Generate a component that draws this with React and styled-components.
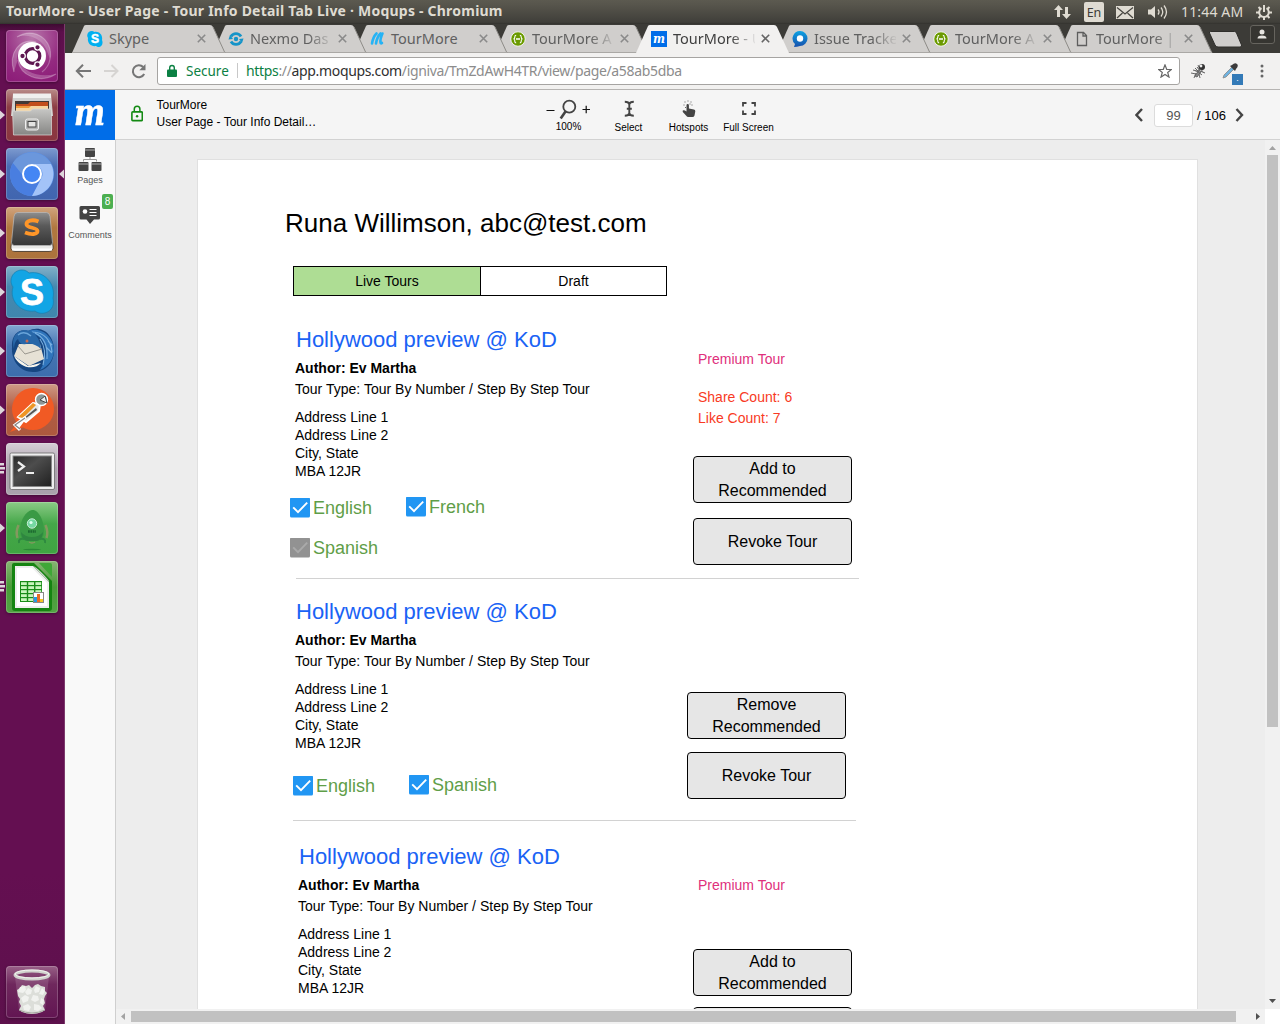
import React from "react";
import styled, { createGlobalStyle, css } from "styled-components";

const sans = '"Liberation Sans", Arial, sans-serif';
const chrome = '"Noto Sans", "Open Sans", sans-serif';

const Global = createGlobalStyle`
  * { box-sizing: border-box; }
  html, body { margin: 0; padding: 0; overflow: hidden; }
  body { font-family: ${sans}; color: #000; background: #ededed; }
  svg { display: block; flex: none; }
`;

/* ---------- desktop ---------- */
const Desktop = styled.div`
  width: 1280px;
  height: 1024px;
  display: flex;
  flex-direction: column;
  overflow: hidden;
`;
const MenuBar = styled.header`
  height: 24px;
  flex: none;
  display: flex;
  align-items: center;
  justify-content: space-between;
  padding: 0 8px 0 6px;
  background: linear-gradient(#5c5a50, #57554c 20%, #403f3a 92%, #33322e);
  color: #dfdbd2;
  font-family: ${chrome};
`;
const WindowTitle = styled.h1`
  margin: -2px 0 0;
  font-size: 14px;
  line-height: 22px;
  font-weight: 700;
  letter-spacing: 0.22px;
  white-space: nowrap;
`;
const Indicators = styled.div`
  display: flex;
  align-items: center;
  height: 24px;
`;
const LanguageBadge = styled.span`
  width: 20px;
  height: 20px;
  margin: 0 12px 0 13px;
  border-radius: 2px;
  background: #dfdbd2;
  color: #3c3b37;
  font-size: 12.5px;
  line-height: 21px;
  text-align: center;
`;
const VolumeIcon = styled.svg`
  margin-left: 13px;
`;
const Clock = styled.span`
  width: 63px;
  margin: -1px 12px 0 12px;
  font-size: 14px;
  line-height: 22px;
  letter-spacing: 0.15px;
  white-space: nowrap;
`;
const Workspace = styled.div`
  flex: 1;
  display: flex;
  min-height: 0;
`;

/* ---------- launcher ---------- */
const Launcher = styled.nav`
  width: 65px;
  flex: none;
  display: flex;
  flex-direction: column;
  gap: 7px;
  padding: 6px 0 6px;
  border-right: 1px solid #7d3a6d;
  background: linear-gradient(#3e0a32, #5c0f4b 8px, #640f51 45px, #640f51 85%, #5d114c);
`;
const LauncherItem = styled.div`
  position: relative;
  width: 64px;
  height: 52px;
  padding-left: 6px;
  ${(p) => p.$last && css`margin-top: auto;`}
`;
const Tile = styled.div`
  width: 52px;
  height: 52px;
  border-radius: 4px;
  overflow: hidden;
  background: ${(p) => p.$bg};
  box-shadow: inset 0 0 0 1px rgba(255, 255, 255, 0.2), 0 1px 3px rgba(0, 0, 0, 0.35);
`;
const Running = styled.svg`
  position: absolute;
  left: 0;
  top: 20px;
`;
const Focused = styled.svg`
  position: absolute;
  right: 0;
  top: 20px;
`;

/* ---------- browser ---------- */
const Browser = styled.main`
  flex: 1;
  display: flex;
  flex-direction: column;
  min-width: 0;
`;
const TabStrip = styled.div`
  height: 29px;
  flex: none;
  display: flex;
  padding-left: 6.5px;
  background: #3c3b37;
  position: relative;
  overflow: hidden;
`;
const TabBox = styled.div`
  position: relative;
  z-index: ${(p) => p.$z};
  width: 154px;
  margin-right: -13px;
  height: 29px;
  flex: none;
  display: flex;
  align-items: center;
  padding: 0 0 0 15.5px;
`;
const TabShape = styled.svg`
  position: absolute;
  inset: 0;
  z-index: -1;
`;
const TabTitle = styled.span`
  width: 82px;
  margin: -1px 6px 0 6px;
  font: 14.5px/24px ${chrome};
  color: ${(p) => (p.$active ? "#3f3f3f" : "#606060")};
  white-space: nowrap;
  ${(p) => p.$fade && css`mask-image: linear-gradient(90deg, #000 58px, rgba(0, 0, 0, 0.08) 82px);`}
`;
const NewTab = styled.svg`
  margin: 7px 8px 0 9px;
`;
const UserButton = styled.div`
  width: 25px;
  height: 19px;
  margin-top: 1px;
  border: 1px solid #66645e;
  border-radius: 3px;
  background: #363531;
  display: flex;
  align-items: center;
  justify-content: center;
`;
const AddressBar = styled.div`
  height: 37px;
  flex: none;
  display: flex;
  align-items: center;
  padding: 0 8px 1px 10px;
  background: #f2f1f0;
  border-bottom: 1px solid #b6b4b2;
`;
const NavIcon = styled.svg`
  margin-left: ${(p) => p.$gap || 0}px;
`;
const UrlField = styled.div`
  width: 1023px;
  height: 28px;
  margin: 0 10px 0 9px;
  padding: 0 7px 0 8px;
  display: flex;
  align-items: center;
  border: 1px solid #a6a4a2;
  border-radius: 3px;
  background: #fff;
  font: 14px/26px ${chrome};
`;
const Secure = styled.span`
  width: 51px;
  margin-left: 8px;
  color: #0b8043;
  height: 26px;
  font-size: 13.5px;
`;
const UrlText = styled.span`
  flex: 1;
  height: 26px;
  padding-left: 8px;
  color: #8c8c8c;
  letter-spacing: -0.34px;
  b { font-weight: 400; color: #0b8043; }
  i { font-style: normal; color: #303030; }
`;
const UrlDivider = styled.span`
  width: 1px;
  height: 15px;
  background: #c8c8c8;
`;
const Extension = styled.div`
  position: relative;
  margin-right: ${(p) => p.$gap}px;
`;
const ExtensionBadge = styled.span`
  position: absolute;
  left: 10px;
  top: 11px;
  width: 11px;
  height: 11px;
  background: #337ab7;
  color: #fff;
  font: 9px/9px ${sans};
  text-align: center;
`;

/* ---------- Moqups shell ---------- */
const AppHeader = styled.div`
  height: 50px;
  flex: none;
  display: flex;
`;
const Logo = styled.div`
  width: 50px;
  height: 50px;
  background: #006de8;
  color: #fff;
  font: italic 700 35px/46px "DejaVu Serif", serif;
  display: flex;
  justify-content: center;
  span { transform: scaleX(0.84); -webkit-text-stroke: 0.5px #fff; }
`;
const HeaderBar = styled.div`
  flex: 1;
  display: flex;
  align-items: flex-start;
  padding-left: 16px;
  background: #f5f5f5;
  border-bottom: 1px solid #d2d2d2;
`;
const LockSlot = styled.div`
  width: 25.5px;
  padding-top: 15px;
`;
const DocumentName = styled.div`
  width: 382px;
  padding-top: 7px;
  font-size: 12px;
  line-height: 17px;
`;
const Tool = styled.div`
  width: 60px;
  padding-top: ${(p) => p.$top || 10}px;
  display: flex;
  flex-direction: column;
  align-items: center;
  font-size: 10px;
  line-height: 12px;
  white-space: nowrap;
`;
const ToolIcon = styled.div`
  height: 22px;
  display: flex;
  justify-content: center;
`;
const Pager = styled.div`
  margin-left: auto;
  height: 50px;
  padding-right: 36px;
  display: flex;
  align-items: center;
  font-size: 13px;
`;
const PageInput = styled.div`
  width: 39px;
  height: 23px;
  margin: 1px 4px 0 11px;
  border: 1px solid #dcdcdc;
  border-radius: 3px;
  background: #fff;
  color: #555;
  line-height: 22px;
  text-align: center;
`;
const PageTotal = styled.span`
  width: 38px;
  padding-top: 1px;
`;
const Body = styled.div`
  flex: 1;
  display: flex;
  min-height: 0;
`;
const SideBar = styled.aside`
  width: 51px;
  flex: none;
  padding-top: 8px;
  background: #f9f9f9;
  border-right: 1px solid #cfcfcf;
`;
const SideItem = styled.div`
  position: relative;
  width: 50px;
  height: 56px;
  display: flex;
  flex-direction: column;
  align-items: center;
  font-size: 9px;
  line-height: 11px;
  color: #555;
  svg { margin-bottom: 3px; }
`;
const CountBadge = styled.span`
  position: absolute;
  right: 2px;
  top: -10px;
  width: 11px;
  height: 15px;
  border-radius: 2px;
  background: #4caf50;
  color: #fff;
  font-size: 10px;
  line-height: 15px;
  text-align: center;
`;
const Viewport = styled.div`
  flex: 1;
  display: grid;
  grid-template: 1fr 15px / 1fr 15px;
  min-width: 0;
`;
const Canvas = styled.div`
  overflow: hidden;
  min-height: 0;
  padding: 19px 0 0 81px;
  background: #ededed;
`;
const VerticalBar = styled.div`
  display: flex;
  flex-direction: column;
  align-items: center;
  justify-content: space-between;
  background: #f1f1f1;
  padding: 6px 0 6px;
`;
const VerticalThumb = styled.div`
  width: 11px;
  height: 572px;
  margin: 5px 0 auto;
  background: #c1c1c1;
`;
const HorizontalBar = styled.div`
  display: flex;
  align-items: center;
  background: #f1f1f1;
  padding: 0 5px 0 5px;
`;
const HorizontalThumb = styled.div`
  width: 1105px;
  height: 11px;
  margin: 0 auto 0 6px;
  background: #c1c1c1;
`;
const Corner = styled.div`
  background: #fff;
`;

/* ---------- mock-up page ---------- */
const Sheet = styled.div`
  width: 1001px;
  height: 1100px;
  border: 1px solid #e0e0e0;
  background: #fff;
  padding: 47px 0 0 87px;
`;
const UserName = styled.h2`
  margin: 0;
  font-size: 26px;
  font-weight: 400;
  line-height: 32px;
`;
const Segments = styled.div`
  width: 374px;
  height: 30px;
  margin: 27px 0 31px 8px;
  display: flex;
  border: 1px solid #000;
`;
const Segment = styled.div`
  flex: ${(p) => (p.$active ? "0 0 186px" : "1")};
  font-size: 14px;
  line-height: 28px;
  text-align: center;
  background: ${(p) => (p.$active ? "#aedd94" : "#fff")};
  & + & { border-left: 1px solid #000; }
`;
const TourBlock = styled.section`
  width: 580px;
  height: ${(p) => p.$height}px;
  display: flex;
  flex-direction: column;
  padding-left: 5px;
`;
const TourRow = styled.div`
  display: flex;
  height: ${(p) => p.$height}px;
`;
const TourInfo = styled.div`
  width: ${(p) => p.$width}px;
  flex: none;
`;
const TourDetails = styled.div`
  padding-left: ${(p) => p.$indent}px;
  font-size: 14px;
`;
const TourTitle = styled.h3`
  margin: 0 0 5px 1px;
  font-size: 22px;
  font-weight: 400;
  line-height: 26px;
  color: #1a63f5;
`;
const Author = styled.div`
  font-weight: 700;
  line-height: 20px;
`;
const TourType = styled.div`
  line-height: 22px;
  letter-spacing: 0.012px;
`;
const Address = styled.div`
  margin-top: 8px;
  line-height: 18px;
`;
const Languages = styled.div`
  display: grid;
  grid-template-columns: 116px 116px;
  row-gap: 18px;
  margin: ${(p) => p.$top}px 0 0 ${(p) => p.$indent}px;
`;
const Language = styled.div`
  height: 22px;
  padding-top: ${(p) => (p.$raised ? 0.4 : 1.4)}px;
  display: flex;
  align-items: flex-start;
  gap: 3px;
  font-size: 18px;
  line-height: 20.4px;
  color: #5f9e48;
`;
const Actions = styled.div`
  width: 159px;
  display: flex;
  flex-direction: column;
  font-size: 14px;
  line-height: 21px;
`;
const Premium = styled.div`
  margin: ${(p) => p.$top}px 0 0 5px;
  color: #e0307c;
`;
const Counts = styled.div`
  margin: 17px 0 0 5px;
  color: #f83a24;
`;
const ActionButton = styled.div`
  height: 47px;
  flex: none;
  margin-top: ${(p) => p.$top}px;
  padding: 0 20px;
  display: flex;
  align-items: center;
  justify-content: center;
  text-align: center;
  border: 1px solid #000;
  border-radius: 4px;
  background: #e6e6e6;
  font-size: 16px;
  line-height: 22px;
`;
const Divider = styled.div`
  width: 563px;
  height: 1px;
  flex: none;
  margin-left: ${(p) => p.$left}px;
  background: #d2d2d2;
`;

/* ---------- launcher drawings ---------- */
const art = {
  ubuntu: (
    <svg width="52" height="52">
      <g fill="none" stroke="#fff" strokeOpacity=".28" strokeWidth="1.2">
        <path d="M11 7C28-4 48 10 44 29c-1 7-4 10-8 13" />
        <path d="M8 42C2 22 14 8 30 12" />
        <path d="M50 44C34 54 14 46 12 30" />
      </g>
      <path d="M11 7C28-4 48 10 44 29l-3-8C37 10 24 3 11 7z" fill="#fff" opacity=".22" />
      <path d="M8 42C2 22 14 8 30 12c-12 0-20 8-19 20z" fill="#fff" opacity=".22" />
      <path d="M50 44C34 54 14 46 12 30c6 12 20 18 38 14z" fill="#fff" opacity=".22" />
      <circle cx="26" cy="26" r="14" fill="#fff" />
      <circle cx="26.500" cy="26" r="7.300" fill="none" stroke="#5e1750" strokeWidth="3.200" />
      <g fill="#5e1750" stroke="#fff" strokeWidth="1.3">
        <circle cx="16.500" cy="26" r="2.800" /><circle cx="31.500" cy="17.300" r="2.800" /><circle cx="31.500" cy="34.700" r="2.800" />
      </g>
    </svg>
  ),
  files: (
    <svg width="52" height="52">
      <defs><linearGradient id="cab" x2="0" y2="1"><stop stopColor="#c6c6c4" /><stop offset="1" stopColor="#868684" /></linearGradient></defs>
      <path d="M7 5h38l2 22H5z" fill="#d2d2d0" /><path d="M7 4.500h38V9H7z" fill="#f0f0ee" />
      <path d="M9 12h34v13H9z" fill="#423a36" />
      <path d="M10 15h12l2-2h18v10H10z" fill="#c34f1c" /><path d="M10 17h32v7H10z" fill="#ef9b3b" /><path d="M10 19h13l2-2h17v6H10z" fill="#f7d6a0" />
      <path d="M6.500 22h18l2-2h19v26H7.500z" fill="url(#cab)" stroke="#dcdcda" strokeWidth=".7" />
      <rect x="19.500" y="30" width="13" height="11" rx="2" fill="#b4b4b2" stroke="#eee" />
      <rect x="22" y="32.500" width="8" height="5.500" fill="#e4e4e2" stroke="#444" />
    </svg>
  ),
  chromium: (
    <svg width="52" height="52">
      <circle cx="26" cy="26" r="22" fill="#5c92e8" />
      <path d="M7 15A22 22 0 0 0 26 48L35 31 18 29z" fill="#497ee0" />
      <path d="M7 15A22 22 0 0 1 45 16H26L17 27z" fill="#6b97dc" />
      <path d="M26 16h19A22 22 0 0 1 26 48l9-17c4-6 0-14-9-15z" fill="#a3c3f8" />
      <circle cx="26" cy="26" r="9" fill="#4486f4" stroke="#fff" strokeWidth="2" />
    </svg>
  ),
  sublime: (
    <svg width="52" height="52">
      <defs><linearGradient id="key" x2="0" y2="1"><stop stopColor="#8e8e8e" /><stop offset=".4" stopColor="#5a5a5a" /><stop offset="1" stopColor="#363636" /></linearGradient></defs>
      <path d="M9 14L5 39q-1 5 4 5.500h34q5-.5 4-5.500l-4-25z" fill="#e8e8e6" stroke="#3c3024" strokeWidth=".8" />
      <path d="M11.500 5.500h29q3 0 3.500 4l2.500 26q0 3-3 3H8.500q-3 0-3-3L8 9.500q.5-4 3.500-4z" fill="url(#key)" stroke="#bbb" strokeWidth=".7" />
      <path d="M32.500 14.500c-6-2.500-12.500-1-12 3 .5 4 11 2.500 11 6.500 0 3.500-6 4-12.500 1.500" fill="none" stroke="#ff9628" strokeWidth="3.800" />
      <path d="M6 42.500h40" stroke="#fff" strokeWidth="2" />
    </svg>
  ),
  skype: (
    <svg width="52" height="52">
      <path d="M16 4C7 4 2 14 7 21 3 34 14 47 29 45c8 6 21 0 18-13C50 18 38 4 23 7c-2-2-4-3-7-3z" fill="#12a5e5" stroke="#1781b0" strokeWidth=".7" />
      <text x="26" y="38.500" textAnchor="middle" fill="#fff" stroke="#fff" strokeWidth=".8" strokeLinejoin="round" fontFamily="Liberation Sans" fontWeight="700" fontSize="36">S</text>
    </svg>
  ),
  thunderbird: (
    <svg width="52" height="52">
      <path d="M6 22C5 9 14 3 22 6c14-7 26 4 26 19 0 14-9 22-21 22C14 47 5 36 6 22z" fill="#164681" />
      <path d="M20 7c14-7 28 4 28 19-1 9-5 15-14 19 7-11 8-22 2-30-4-5-9-7-16-8z" fill="#2f74bb" />
      <path d="M26 7c13 0 19 9 20 20M29 8c9 4 13 13 12 26M34 14c5 7 6 15 3 26M42 16l4 4M40 22l6 6" fill="none" stroke="#78afe0" strokeWidth="1.1" />
      <path d="M13 19l21 0 4 15-15 7L8 31z" fill="#e6e1d5" /><path d="M12 21l7 8 17-5" fill="none" stroke="#9a978f" />
      <path d="M8 24C5 14 9 5 20 5c9 1 14 9 15 19-4-4-9-6-15-5-4 1-7-1-8-5-3 2-4 6-4 10z" fill="#2867a8" />
      <path d="M12 10q6-5 13 1" fill="none" stroke="#6aa5da" strokeWidth="1.500" />
      <circle cx="21" cy="16" r="1.500" fill="#c96b51" /><path d="M8 31l14 10 13-3c-6 7-21 6-27-7z" fill="#f8f5ec" />
    </svg>
  ),
  postman: (
    <svg width="52" height="52">
      <circle cx="27" cy="25" r="21" fill="#f15a24" /><path d="M4 48l9-11 5 6z" fill="#f15a24" />
      <path d="M12 33l15-14 7 1-1 7-13 11z" fill="#e6e6e6" stroke="#fff" strokeWidth="2" />
      <path d="M12 33l15-14 3 2-13 13z" fill="#ee9525" /><path d="M18 34l12-10 1 2-12 9z" fill="#555" />
      <circle cx="35.500" cy="15.500" r="6" fill="#8d9696" stroke="#fff" strokeWidth="1.4" /><path d="M34 16l5-4 2 7z" fill="#eee" stroke="#444" strokeWidth="1" />
      <path d="M20 33L9 41l5 5M18 35l-6 8" fill="none" stroke="#fff" strokeWidth="3" /><path d="M19 34L9 41l5 4" fill="none" stroke="#888" strokeWidth="1.3" />
    </svg>
  ),
  terminal: (
    <svg width="52" height="52">
      <defs><linearGradient id="term" x2="1" y2="1"><stop stopColor="#292929" /><stop offset=".4" stopColor="#4d4d4d" /><stop offset="1" stopColor="#202020" /></linearGradient></defs>
      <rect x="4" y="10" width="44.500" height="36.500" rx="1.500" fill="#eee" stroke="#686868" strokeWidth=".8" />
      <rect x="7" y="13" width="38.500" height="30.500" fill="url(#term)" stroke="#888" />
      <path d="M12 19l6 4.500-6 4.500" fill="none" stroke="#eee" strokeWidth="2.200" /><path d="M20 30h8" stroke="#eee" strokeWidth="2" />
    </svg>
  ),
  robot: (
    <svg width="52" height="52">
      <path d="M14 29C14 18 20 9 26 8s12 10 12 21q0 8-6 10H20q-6-2-6-10z" fill="#3a9a45" />
      <path d="M15 30q0 7 6 9h10q6-2 6-9-4 5-11 5t-11-5z" fill="#2f8640" />
      <path d="M12.500 23q-3 7-1 13M39.500 23q3 7 1 13" fill="none" stroke="#84995f" strokeWidth="2.500" />
      <path d="M23 40q3 2 6 0" fill="none" stroke="#84995f" strokeWidth="1.500" />
      <path d="M22 29.500h8" stroke="#1d6a31" strokeWidth="2.500" strokeDasharray="1.800 .6" />
      <path d="M18 37q-6-1-5 4M34 37q6-1 5 4" fill="none" stroke="#2f8a40" strokeWidth="2" />
      <circle cx="26" cy="21.500" r="4.700" fill="#75d9a2" stroke="#c8ecd6" /><circle cx="25" cy="20.500" r="1.600" fill="#e0fff0" />
      <ellipse cx="26" cy="47.500" rx="9" ry=".8" fill="#2b8737" />
    </svg>
  ),
  calc: (
    <svg width="52" height="52">
      <path d="M8 2h20l18 18v27q0 3-3 3H9q-3 0-3-3V4q0-2 2-2z" fill="#158411" /><path d="M33 2h11q2 0 2 2v12z" fill="#3fa737" />
      <path d="M9 5h18l16 16v26H9z" fill="#eee" /><path d="M11 7h15l15 15v23H11z" fill="#fff" />
      <path d="M27 5l16 16v-1q-2-3-8-9-5-5-8-6z" fill="#d0d0d0" />
      <rect x="14" y="20" width="22" height="21" fill="#188c18" />
      {[0, 1, 2, 3, 4].map((r) => [0, 1, 2].map((c) => <rect key={`${r}-${c}`} x={15 + c * 7.2} y={21.2 + r * 4} width="5.800" height="2.800" fill="#c9f5bd" />))}
      <rect x="27.500" y="31.500" width="10" height="10" fill="#fff" stroke="#888" /><path d="M28 36h3v5h-3z" fill="#249ce5" /><path d="M31 33h3v8h-3z" fill="#e96b24" /><path d="M34 38h3v3h-3z" fill="#f6c522" />
    </svg>
  ),
  trash: (
    <svg width="52" height="52">
      <path d="M9 11l4 33q13 7 26 0l4-33z" fill="#ead9e6" opacity=".16" />
      <path d="M11 24l3-2 2-3 4 1 3-1 3 3 3-3 3-1 3 2 4 1v4l2 2-2 3-1 3 1 4-2 3 2 4-3 2q-10 4-20 0l-3-2 2-4-2-4 1-3-2-3z" fill="#dcded9" />
      <g fill="#f1f2ef"><path d="M14 21l5-1 1 4-3 3-5-1zM22 22l4 2-1 4-4 1-2-3zM30 20l4 2-1 4-4 1-1-3zM36 22l3 3-2 4-4-1zM15 32l4-3 4 2-1 4-5 2zM27 29l5 1 1 4-4 2-4-2zM35 32l3 2-1 5-3-2zM17 40l5-2 3 3-2 4-5-1zM28 38l5 1 3 3-4 3-4-1z" /></g>
      <ellipse cx="26" cy="9" rx="17" ry="4" fill="none" stroke="#d0d2cd" strokeWidth="3" /><ellipse cx="26" cy="8" rx="17" ry="4" fill="none" stroke="#f2f3ef" strokeWidth="1" />
      <path d="M13 44q13 6 26 0" fill="none" stroke="#a4a79f" />
    </svg>
  ),
};

const launcherItems = [
  { id: "ubuntu", bg: "radial-gradient(circle at 50% 15%, #b876ab, #942a80 60%, #8b1a77)" },
  { id: "files", bg: "linear-gradient(#b98d89, #8d3d44 35%, #8a3640)", windows: 1 },
  { id: "chromium", bg: "linear-gradient(#7d9bcf, #4a6db5 35%, #4065af)", windows: 1, focused: true },
  { id: "sublime", bg: "linear-gradient(#d1a47e, #b1773f 40%, #ac733c)", windows: 1 },
  { id: "skype", bg: "linear-gradient(#83b1c8, #4689b0 40%, #3f86ad)", windows: 1 },
  { id: "thunderbird", bg: "linear-gradient(#82a8d2, #4877b4 40%, #3c6dac)", windows: 1 },
  { id: "postman", bg: "linear-gradient(#cf9a87, #b15d44 45%, #ad593e)", windows: 1 },
  { id: "terminal", bg: "linear-gradient(#d5ced6, #aaa0ab 50%, #aaa3ad)", windows: 3 },
  { id: "robot", bg: "linear-gradient(#8bcb86, #45a749 42%, #3fa342)", windows: 1 },
  { id: "calc", bg: "linear-gradient(#88b574, #499b38 50%, #52a344)", windows: 3 },
  { id: "trash", bg: "linear-gradient(#986087, #6f285d 35%, #621552)", last: true },
];

function RunningMark({ count }) {
  return (
    <Running width="6" height="13">
      {count === 1 ? (
        <path d="M0 1.500l5 4.500-5 4.500z" fill="#ddd6db" />
      ) : (
        <path d="M0 0h4v2.500H0zM0 4h5v2.500H0zM0 8h4v2.500H0z" fill="#ddd6db" />
      )}
    </Running>
  );
}

/* ---------- tab icons ---------- */
const Swagger = (
  <svg width="16" height="16"><circle cx="8" cy="8" r="7.200" fill="#6b9a00" stroke="#fff" strokeWidth=".8" /><path d="M6.200 4.300Q4.800 4.300 4.800 6T3.500 8q1.300 0 1.300 2t1.400 1.700M9.800 4.300q1.400 0 1.400 1.700t1.300 2q-1.300 0-1.300 2t-1.400 1.700" fill="none" stroke="#fff" strokeWidth="1.100" /><path d="M6 8h4" stroke="#fff" strokeWidth="1.500" /></svg>
);
const favicons = {
  skype: (
    <svg width="16" height="16"><path d="M5 0C1 0-1 4 1 7c-1 5 3 9 8 8 4 3 8-1 6-6C16 4 12 0 7.500 1Q6 0 5 0z" fill="#00aff0" /><text x="8" y="12.300" textAnchor="middle" fontFamily="Liberation Sans" fontWeight="700" fontSize="12" fill="#fff" stroke="#fff" strokeWidth=".5">S</text></svg>
  ),
  nexmo: (
    <svg width="16" height="16"><path d="M3 5.500a5.800 5.800 0 0 1 10 0M13 10.500a5.800 5.800 0 0 1-10 0" fill="none" stroke="#1594c8" strokeWidth="2.800" /><circle cx="8" cy="8" r="2.200" fill="#1594c8" /><path d="M.5 8.500L2 4l3 4zM15.500 7.500L14 12l-3-4z" fill="#1594c8" /></svg>
  ),
  wave: (
    <svg width="16" height="16"><path d="M3 12.500Q4 6 7.500 2.500M7 12.500Q8 6 11.500 2.500M13.500 2.500Q11 8 11.500 11.500q.2 1.500 1.500 .5" stroke="#25b3f5" strokeWidth="2.600" strokeLinecap="round" fill="none" /></svg>
  ),
  swagger: Swagger,
  moqups: (
    <svg width="16" height="16"><rect width="16" height="16" fill="#006de8" /><text x="2" y="11.800" textLength="12" lengthAdjust="spacingAndGlyphs" fontFamily="DejaVu Serif" fontStyle="italic" fontWeight="700" fontSize="13.500" fill="#fff">m</text></svg>
  ),
  issue: (
    <svg width="16" height="16"><defs><linearGradient id="iss" x2="0" y2="1"><stop stopColor="#0ca2e3" /><stop offset="1" stopColor="#1750ac" /></linearGradient></defs><path d="M8 0a7.500 7.500 0 0 1 0 15q-3 1-6 1l1-3A7.500 7.500 0 0 1 8 0z" fill="url(#iss)" /><circle cx="8" cy="7.500" r="3.200" fill="#fff" /></svg>
  ),
  file: (
    <svg width="16" height="16"><path d="M3.500 1.500h6l3 3v10h-9zM9 1.500V5h3.500" fill="none" stroke="#5e5e5e" strokeWidth="1.300" /></svg>
  ),
};
const tabs = [
  { icon: "skype", title: "Skype" },
  { icon: "nexmo", title: "Nexmo Das", fade: true },
  { icon: "wave", title: "TourMore" },
  { icon: "swagger", title: "TourMore A", fade: true },
  { icon: "moqups", title: "TourMore - U", fade: true, active: true },
  { icon: "issue", title: "Issue Tracke", fade: true },
  { icon: "swagger", title: "TourMore A", fade: true },
  { icon: "file", title: "TourMore | A", fade: true },
];

function Tab({ tab, index }) {
  return (
    <TabBox $z={tab.active ? 20 : 10 - index}>
      <TabShape width="154" height="29">
        <path d="M0 29L12 2Q12.500 1 14 1H138Q140 1 141 3L153 29z" fill={tab.active ? "#f2f1f0" : "#d0cecc"} />
        <path d="M141 3L153 29" stroke={tab.active ? "none" : "#8d8b88"} />
        {!tab.active && <path d="M0 28.500H153" stroke="#aaa8a5" />}
      </TabShape>
      {favicons[tab.icon]}
      <TabTitle $fade={tab.fade} $active={tab.active}>{tab.title}</TabTitle>
      <svg width="9" height="9"><path d="M.8.8l7.400 7.400M8.200.8L.8 8.200" stroke={tab.active ? "#666" : "#8a8a8a"} strokeWidth="1.600" /></svg>
    </TabBox>
  );
}

/* ---------- tours ---------- */
const tours = [
  {
    height: 272, rowHeight: 251, indent: 0, infoWidth: 403, premiumTop: 22, counts: true,
    langTop: 17, langIndent: -5, dividerLeft: 5.5,
    languages: [["English", true, false], ["French", true, true], ["Spanish", false, false]],
    actions: [["Add to Recommended", 27], ["Revoke Tour", 15]],
  },
  {
    height: 245, rowHeight: 221, indent: 0, infoWidth: 397,
    langTop: 23, langIndent: -2, dividerLeft: 3,
    languages: [["English", true, false], ["Spanish", true, true]],
    actions: [["Remove Recommended", 93], ["Revoke Tour", 13]],
  },
  {
    height: 240, rowHeight: 230, indent: 3, infoWidth: 403, premiumTop: 31,
    languages: [],
    actions: [["Add to Recommended", 53], ["", 11]],
  },
];

function Check({ on }) {
  return (
    <svg width="20" height="21"><rect y="-.4" width="20" height="20" rx="1.500" fill={on ? "#2196f3" : "#929292"} /><path d="M3.200 9.300l4.800 4.800L17.200 4.600" fill="none" stroke={on ? "#fff" : "#aaa"} strokeWidth="1.900" /></svg>
  );
}

function Tour({ tour }) {
  return (
    <TourBlock $height={tour.height}>
      <TourRow $height={tour.rowHeight}>
        <TourInfo $width={tour.infoWidth}>
          <TourDetails $indent={5 + tour.indent}>
            <TourTitle>Hollywood preview @ KoD</TourTitle>
            <Author>Author: Ev Martha</Author>
            <TourType>Tour Type: Tour By Number / Step By Step Tour</TourType>
            <Address>
              Address Line 1<br />Address Line 2<br />City, State<br />MBA 12JR
            </Address>
            <Languages $top={tour.langTop} $indent={tour.langIndent}>
              {tour.languages.map(([name, on, raised]) => (
                <Language key={name} $raised={raised}><Check on={on} />{name}</Language>
              ))}
            </Languages>
          </TourDetails>
        </TourInfo>
        <Actions>
          {tour.premiumTop && <Premium $top={tour.premiumTop}>Premium Tour</Premium>}
          {tour.counts && <Counts>Share Count: 6<br />Like Count: 7</Counts>}
          {tour.actions.map(([label, top]) => <ActionButton key={label} $top={top}>{label}</ActionButton>)}
        </Actions>
      </TourRow>
      {tour.dividerLeft && <Divider $left={tour.dividerLeft} />}
    </TourBlock>
  );
}

export default function App() {
  return (
    <Desktop>
      <Global />
      <MenuBar>
        <WindowTitle>TourMore - User Page - Tour Info Detail Tab Live · Moqups - Chromium</WindowTitle>
        <Indicators>
          <svg width="17" height="16"><path d="M0 6l4.500-5L9 6H6v7H3V6zM8 10h3V3h3v7h3l-4.500 5z" fill="#dfdbd2" /></svg>
          <LanguageBadge>En</LanguageBadge>
          <svg width="18" height="13"><rect width="18" height="13" fill="#dfdbd2" /><path d="M1 1.500l8 6.500 8-6.500M1 12l5.500-5M17 12l-5.500-5" fill="none" stroke="#45433e" strokeWidth="1.200" /></svg>
          <VolumeIcon width="22" height="16"><path d="M1 5.500h3L8 2v12L4 10.500H1z" fill="#dfdbd2" /><path d="M11 5.500q2 2.500 0 5M14 3.500q3.500 4.500 0 9M17 1.500q5 6.500 0 13" fill="none" stroke="#dfdbd2" strokeWidth="1.300" /></VolumeIcon>
          <Clock>11:44 AM</Clock>
          <svg width="16" height="16"><g fill="none" stroke="#dfdbd2"><path d="M5.500 4.200a4.800 4.800 0 1 0 5 0" strokeWidth="2" /><path d="M8 1v7" strokeWidth="2" /><path d="M0 8.500h3M13 8.500h3M8 13v3M2.500 3l2 2M13.500 3l-2 2M2.500 14l2-2M13.500 14l-2-2" strokeWidth="2" /></g></svg>
        </Indicators>
      </MenuBar>
      <Workspace>
        <Launcher>
          {launcherItems.map((it) => (
            <LauncherItem key={it.id} $last={it.last}>
              {it.windows && <RunningMark count={it.windows} />}
              <Tile $bg={it.bg}>{art[it.id]}</Tile>
              {it.focused && <Focused width="5" height="12"><path d="M5 1.500L0 6l5 4.500z" fill="#ddd6db" /></Focused>}
            </LauncherItem>
          ))}
        </Launcher>
        <Browser>
          <TabStrip>
            {tabs.map((t, i) => <Tab key={i} tab={t} index={i} />)}
            <NewTab width="33" height="17"><path d="M1.500.5h24q1.500 0 2 1.500l5 12q.5 2-1.500 2H9q-2 0-3-2L.5 2Q0 .5 1.500.5z" fill="#d0cecc" stroke="#2f2e2b" /></NewTab>
            <UserButton><svg width="10" height="11"><circle cx="5" cy="3" r="2.500" fill="#e6e4e0" /><path d="M.5 9.500q0-3 4.500-3t4.500 3z" fill="#e6e4e0" /></svg></UserButton>
          </TabStrip>
          <AddressBar>
            <NavIcon width="17" height="16"><path d="M16 8H2M8 1.700L1.800 8 8 14.300" fill="none" stroke="#767676" strokeWidth="2" /></NavIcon>
            <NavIcon $gap={12} width="16" height="16"><path d="M0 8h13M7.500 2l6 6-6 6" fill="none" stroke="#d6d4d2" strokeWidth="2" /></NavIcon>
            <NavIcon $gap={11} width="17" height="16"><path d="M13.200 11A6 6 0 1 1 12.200 4" fill="none" stroke="#767676" strokeWidth="2" /><path d="M14.500 1v6.300H8.300z" fill="#767676" /></NavIcon>
            <UrlField>
              <svg width="12" height="14"><path d="M2 5.500h8q1 0 1 1V12q0 1-1 1H2q-1 0-1-1V6.500q0-1 1-1z" fill="#0b8043" /><path d="M3.700 6V3.800a2.300 2.300 0 0 1 4.600 0V6" fill="none" stroke="#0b8043" strokeWidth="1.400" /></svg>
              <Secure>Secure</Secure>
              <UrlDivider />
              <UrlText><b>https</b>://<i>app.moqups.com</i>/igniva/TmZdAwH4TR/view/page/a58ab5dba</UrlText>
              <svg width="14" height="14"><path d="M7 .9l1.700 4.400 4.700.2-3.700 3 1.300 4.600L7 10.500l-4 2.600 1.300-4.600-3.700-3 4.700-.2z" fill="none" stroke="#666" strokeWidth="1.200" /></svg>
            </UrlField>
            <Extension $gap={16}>
              <svg width="16" height="16"><path d="M5 13l6-9 2 2-6 8zM3 7l4 1 5 4M7 4l3 4 5 2M1 10l5 1M4 15l2-5M8 2l2 5M5 5l4 4M10 15l-1-4" fill="#888" stroke="#666" strokeWidth="1" /><circle cx="12" cy="4" r="3" fill="#333" /><circle cx="11" cy="3" r="1.400" fill="#eee" /></svg>
            </Extension>
            <Extension $gap={19}>
              <svg width="16" height="16"><path d="M1 15l1-3 8-8 2 2-8 8z" fill="#6fb2df" stroke="#888" strokeWidth=".8" /><path d="M8 3l2-1q3-3 5-1t-1 5l-1 2z" fill="#3c3b3c" /></svg>
              <ExtensionBadge>.</ExtensionBadge>
            </Extension>
            <NavIcon $gap={3} width="4" height="14"><g fill="#666"><circle cx="2" cy="2" r="1.500" /><circle cx="2" cy="7" r="1.500" /><circle cx="2" cy="12" r="1.500" /></g></NavIcon>
          </AddressBar>
          <AppHeader>
            <Logo><span>m</span></Logo>
            <HeaderBar>
              <LockSlot><svg width="12" height="17"><rect x=".9" y="6.900" width="10.400" height="8.700" rx=".8" fill="none" stroke="#138a13" strokeWidth="1.600" /><path d="M3.300 7V4a2.800 2.800 0 0 1 5.600 0v3" fill="none" stroke="#138a13" strokeWidth="1.500" /><circle cx="6.100" cy="11.200" r="1.200" fill="#138a13" /></svg></LockSlot>
              <DocumentName>TourMore<br />User Page - Tour Info Detail…</DocumentName>
              <Tool $top={9}><ToolIcon><svg width="46" height="22"><path d="M.5 11.500h8M36.500 10.500h7.500M40.200 6.800v7.500" stroke="#111" strokeWidth="1.200" /><circle cx="23.300" cy="7.700" r="6" fill="none" stroke="#444" strokeWidth="1.800" /><path d="M19.500 12.500l-4.800 7" stroke="#444" strokeWidth="2.600" /></svg></ToolIcon>100%</Tool>
              <Tool><ToolIcon><svg width="10" height="19"><path d="M.8 1.700q4 0 4.500 2.500v9Q4.800 15.700.8 15.700M9.800 1.700Q5.800 1.700 5.300 4.200v9q.5 2.500 4.500 2.500M2.800 8.700h5" fill="none" stroke="#444" strokeWidth="1.900" /></svg></ToolIcon>Select</Tool>
              <Tool><ToolIcon><svg width="14" height="20"><path d="M4.500 10V5.200q0-1.200 1.200-1.200t1.200 1.200V8.500l5 1q1.400.3 1.400 1.800L12.500 15.500q-.6 1.500-2 1.500H6.500q-1.500 0-2.500-1.500L.8 12q-.6-1.500.6-1.800 1.200-.2 3.100 1.400z" fill="#444" /><path d="M1.500 5h1M2.500 2h1M5.500 1h1M8.500 2h1M9.500 5h1M3 7.500h1M7.500 4h1" stroke="#666" strokeWidth="1" /></svg></ToolIcon>Hotspots</Tool>
              <Tool><ToolIcon><svg width="14" height="20"><path d="M1 6.500V3h3.500M9.500 3H13v3.500M13 10.500V14H9.500M4.500 14H1v-3.500" fill="none" stroke="#444" strokeWidth="1.800" /></svg></ToolIcon>Full Screen</Tool>
              <Pager>
                <svg width="8" height="14"><path d="M7 1L1.500 7 7 13" fill="none" stroke="#444" strokeWidth="2.400" /></svg>
                <PageInput>99</PageInput>
                <PageTotal>/ 106</PageTotal>
                <svg width="9" height="14"><path d="M1.500 1L7 7l-5.500 6" fill="none" stroke="#444" strokeWidth="2.400" /></svg>
              </Pager>
            </HeaderBar>
          </AppHeader>
          <Body>
            <SideBar>
              <SideItem>
                <svg width="24" height="24"><g fill="#444"><rect x="7" y="0" width="10" height="9" rx="1" /><rect x=".5" y="14" width="10" height="9" rx="1" /><rect x="13.500" y="14" width="10" height="9" rx="1" /></g><path d="M7 2h10M.5 16h10M13.500 16h10" stroke="#f9f9f9" strokeWidth=".6" /><path d="M12 9v2.500M5.500 13.500v-2h13v2" fill="none" stroke="#999" /></svg>
                Pages
              </SideItem>
              <SideItem>
                <CountBadge>8</CountBadge>
                <svg width="22" height="23"><path d="M2 2h17.500q1.500 0 1.500 1.500V14q0 1.500-1.500 1.500h-4.500L11 20l-3.500-4.500H2Q.5 15.500.5 14V3.500Q.5 2 2 2z" fill="#444" /><circle cx="6" cy="7.500" r="2.300" fill="#fff" /><path d="M10.500 5.500h7M10.500 8.500h7M10.500 11.500h7" stroke="#fff" strokeWidth="1.100" /></svg>
                Comments
              </SideItem>
            </SideBar>
            <Viewport>
              <Canvas>
                <Sheet>
                  <UserName>Runa Willimson, abc@test.com</UserName>
                  <Segments><Segment $active>Live Tours</Segment><Segment>Draft</Segment></Segments>
                  {tours.map((t, i) => <Tour key={i} tour={t} />)}
                </Sheet>
              </Canvas>
              <VerticalBar>
                <svg width="7" height="4"><path d="M0 4L3.500 0 7 4z" fill="#a3a3a3" /></svg>
                <VerticalThumb />
                <svg width="7" height="4"><path d="M0 0l3.500 4L7 0z" fill="#505050" /></svg>
              </VerticalBar>
              <HorizontalBar>
                <svg width="4" height="7"><path d="M4 0L0 3.500 4 7z" fill="#a3a3a3" /></svg>
                <HorizontalThumb />
                <svg width="4" height="7"><path d="M0 0l4 3.500L0 7z" fill="#505050" /></svg>
              </HorizontalBar>
              <Corner />
            </Viewport>
          </Body>
        </Browser>
      </Workspace>
    </Desktop>
  );
}
